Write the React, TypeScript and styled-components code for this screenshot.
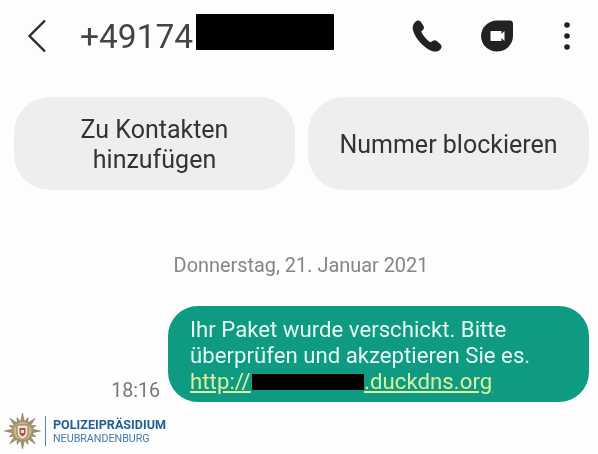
import React from "react";
import styled, { createGlobalStyle } from "styled-components";

const GlobalStyle = createGlobalStyle`
  html, body {
    margin: 0;
    padding: 0;
    background: #fdfdfd;
  }
`;

const Page = styled.div`
  width: 598px;
  height: 454px;
  overflow: hidden;
  display: flex;
  flex-direction: column;
  font-family: Roboto, "Liberation Sans", sans-serif;
  filter: blur(0.45px);
`;

const Header = styled.header`
  height: 72px;
  box-sizing: border-box;
  padding: 14px 28px 0 27px;
  display: flex;
  align-items: flex-start;
`;

const BackButton = styled.div`
  width: 20px;
  height: 34px;
  margin-top: 5px;
  color: #2b2b2b;
`;

const PhoneNumber = styled.div`
  margin-left: 33px;
  height: 36px;
  display: flex;
  flex: 1;
  font-size: 33.5px;
  color: #444;
`;

const PhoneDigits = styled.span`
  width: 116px;
  line-height: 46px;
  white-space: nowrap;
`;

const HeaderRedaction = styled.span`
  width: 138px;
  height: 36px;
  background: #000;
  border-radius: 1px;
`;

const HeaderIcons = styled.div`
  display: flex;
  align-items: center;
  height: 44px;
`;

const IconSlot = styled.div<{ $width: number; $gap: number }>`
  width: ${(p) => p.$width}px;
  margin-right: ${(p) => p.$gap}px;
  display: flex;
  justify-content: center;
  color: #222;
`;

const ActionRow = styled.div`
  margin-top: 25px;
  padding: 0 9px 0 14px;
  display: grid;
  grid-template-columns: 281px 281px;
  column-gap: 13px;
`;

const ActionButton = styled.div`
  height: 93px;
  box-sizing: border-box;
  padding-top: 3px;
  border-radius: 36px;
  background: #eeeeee;
  display: flex;
  align-items: center;
  justify-content: center;
  text-align: center;
  font-size: 25px;
  line-height: 30px;
  color: #333;
`;

const DateLabel = styled.div`
  margin-top: 65px;
  padding-left: 4px;
  text-align: center;
  font-size: 19.9px;
  line-height: 22px;
  color: #858585;
`;

const MessageRow = styled.div`
  margin-top: 29px;
  padding-right: 9px;
  display: flex;
  justify-content: flex-end;
  align-items: flex-end;
`;

const Time = styled.div`
  font-size: 19.6px;
  line-height: 22px;
  color: #777;
  margin: 0 8px 0 0;
`;

const Bubble = styled.div`
  width: 421px;
  height: 96px;
  box-sizing: border-box;
  padding: 10px 0 0 22px;
  border-radius: 30px;
  background: #0f9a82;
  color: #e6f8f2;
  font-size: 22.2px;
  line-height: 26px;
`;

const Link = styled.span`
  display: flex;
  align-items: center;
  color: #d8f0a0;
  letter-spacing: 0.05px;
`;

const LinkText = styled.span<{ $width?: number }>`
  text-decoration: underline;
  text-underline-offset: 2px;
  ${(p) => (p.$width ? `width: ${p.$width}px;` : "")}
`;

const LinkRedaction = styled.span`
  width: 112px;
  height: 16px;
  margin-top: 2px;
  background: #000;
`;

const Footer = styled.footer`
  margin-top: 10px;
  padding-left: 4px;
  display: flex;
  align-items: center;
`;

const Badge = styled.div`
  width: 37px;
  height: 38px;
`;

const Divider = styled.div`
  width: 1px;
  height: 30px;
  margin: 0 7px 0 4px;
  background: #4a86b8;
`;

const OrgName = styled.div`
  font-family: Roboto, "Liberation Sans", sans-serif;
  white-space: nowrap;
`;

const OrgTitle = styled.div`
  font-size: 12.6px;
  line-height: 15px;
  font-weight: 700;
  color: #1f5f96;
`;

const OrgCity = styled.div`
  font-size: 10.7px;
  line-height: 13px;
  color: #3f7cae;
`;

const starPoints = () => {
  const pts: string[] = [];
  for (let i = 0; i < 32; i++) {
    const a = (i * Math.PI) / 16;
    const r = i % 2 === 0 ? (i % 4 === 0 ? 18 : 14.5) : 9.5;
    pts.push(`${(18.5 + r * Math.sin(a)).toFixed(1)},${(19 - r * Math.cos(a)).toFixed(1)}`);
  }
  return pts.join(" ");
};

const PoliceStar = () => (
  <svg width="37" height="38" viewBox="0 0 37 38">
    <polygon points={starPoints()} fill="#a8926a" stroke="#6f6650" strokeWidth="0.5" />
    <circle cx="18.500" cy="19" r="9" fill="#c9b98a" />
    <path d="M13 13h11v8c0 3-2.500 5-5.500 6.500-3-1.500-5.500-3.500-5.500-6.500z" fill="#efe6c4" stroke="#6f6650" strokeWidth="0.8" />
    <path d="M15.500 16h6v5c0 1.500-1.500 2.500-3 3.500-1.500-1-3-2-3-3.500z" fill="#b0505a" />
    <path d="M17 18h3v3h-3z" fill="#e8e0d0" />
  </svg>
);

const App: React.FC = () => (
  <>
    <GlobalStyle />
    <Page>
      <Header>
        <BackButton>
          <svg width="20" height="34" viewBox="0 0 20 34" fill="none">
            <path d="M18 1.500 2.500 17 18 32.500" stroke="currentColor" strokeWidth="2.4" />
          </svg>
        </BackButton>
        <PhoneNumber>
          <PhoneDigits>+49174</PhoneDigits>
          <HeaderRedaction />
        </PhoneNumber>
        <HeaderIcons>
          <IconSlot $width={34} $gap={35}>
            <svg width="32" height="33" viewBox="1.500 2 27.500 29.500">
              <path
                d="M4 3.500c1.500-1.500 3.800-1.300 5 .3l2.200 3.500c.8 1.300.5 2.800-.6 3.700l-1.400 1.200c1 2.800 4.800 7.800 8.500 9.800l1.600-1.300c1.200-.9 2.800-.8 3.800.1l3.300 2.900c1.300 1.200 1.300 3.200 0 4.400l-1 1c-1.500 1.300-3.600 1.700-6 .9C12 27.500 3.500 18.500 1.800 11 1.200 8 2 5.500 4 3.500z"
                fill="currentColor"
              />
            </svg>
          </IconSlot>
          <IconSlot $width={34} $gap={50}>
            <svg width="34" height="34" viewBox="0 0 34 33">
              <path
                d="M17 1h13c1.700 0 3 1.300 3 3v12c0 9-7 16-16 16S1 25 1 16.500 8.500 1 17 1z"
                fill="currentColor"
              />
              <path d="M10.500 11.500h11v3l3-3v10l-3-3v3h-11z" fill="#fdfdfd" />
            </svg>
          </IconSlot>
          <IconSlot $width={6} $gap={0}>
            <svg width="6" height="30" viewBox="0 0 6 30">
              <circle cx="3" cy="4" r="2.800" fill="currentColor" />
              <circle cx="3" cy="15" r="2.800" fill="currentColor" />
              <circle cx="3" cy="26" r="2.800" fill="currentColor" />
            </svg>
          </IconSlot>
        </HeaderIcons>
      </Header>
      <ActionRow>
        <ActionButton>
          Zu Kontakten
          <br />
          hinzufügen
        </ActionButton>
        <ActionButton>Nummer blockieren</ActionButton>
      </ActionRow>
      <DateLabel>Donnerstag, 21. Januar 2021</DateLabel>
      <MessageRow>
        <Time>18:16</Time>
        <Bubble>
          Ihr Paket wurde verschickt. Bitte
          <br />
          überprüfen und akzeptieren Sie es.
          <Link>
            <LinkText $width={62}>http://</LinkText>
            <LinkRedaction />
            <LinkText>.duckdns.org</LinkText>
          </Link>
        </Bubble>
      </MessageRow>
      <Footer>
        <Badge>
          <PoliceStar />
        </Badge>
        <Divider />
        <OrgName>
          <OrgTitle>POLIZEIPRÄSIDIUM</OrgTitle>
          <OrgCity>NEUBRANDENBURG</OrgCity>
        </OrgName>
      </Footer>
    </Page>
  </>
);

export default App;
